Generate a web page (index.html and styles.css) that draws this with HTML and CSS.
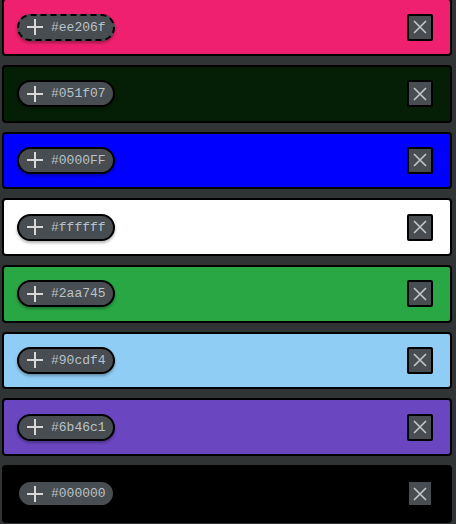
FILE: index.html
```html
<!DOCTYPE html>
<html>
<head>
<meta charset="utf-8">
<link rel="stylesheet" href="styles.css">
</head>
<body>
<div class="list">
  <div class="row" style="background:#ee206f">
    <button class="pill pill-focus"><svg class="plus" viewBox="0 0 16 16"><path d="M8 0V16M0 8H16"/></svg><span>#ee206f</span></button>
    <button class="close"><svg viewBox="0 0 14 14"><path d="M1 1L13 13M13 1L1 13"/></svg></button>
  </div>
  <div class="row" style="background:#051f07">
    <button class="pill"><svg class="plus" viewBox="0 0 16 16"><path d="M8 0V16M0 8H16"/></svg><span>#051f07</span></button>
    <button class="close"><svg viewBox="0 0 14 14"><path d="M1 1L13 13M13 1L1 13"/></svg></button>
  </div>
  <div class="row" style="background:#0000FF">
    <button class="pill"><svg class="plus" viewBox="0 0 16 16"><path d="M8 0V16M0 8H16"/></svg><span>#0000FF</span></button>
    <button class="close"><svg viewBox="0 0 14 14"><path d="M1 1L13 13M13 1L1 13"/></svg></button>
  </div>
  <div class="row" style="background:#ffffff">
    <button class="pill"><svg class="plus" viewBox="0 0 16 16"><path d="M8 0V16M0 8H16"/></svg><span>#ffffff</span></button>
    <button class="close"><svg viewBox="0 0 14 14"><path d="M1 1L13 13M13 1L1 13"/></svg></button>
  </div>
  <div class="row" style="background:#2aa745">
    <button class="pill"><svg class="plus" viewBox="0 0 16 16"><path d="M8 0V16M0 8H16"/></svg><span>#2aa745</span></button>
    <button class="close"><svg viewBox="0 0 14 14"><path d="M1 1L13 13M13 1L1 13"/></svg></button>
  </div>
  <div class="row" style="background:#90cdf4">
    <button class="pill"><svg class="plus" viewBox="0 0 16 16"><path d="M8 0V16M0 8H16"/></svg><span>#90cdf4</span></button>
    <button class="close"><svg viewBox="0 0 14 14"><path d="M1 1L13 13M13 1L1 13"/></svg></button>
  </div>
  <div class="row" style="background:#6b46c1">
    <button class="pill"><svg class="plus" viewBox="0 0 16 16"><path d="M8 0V16M0 8H16"/></svg><span>#6b46c1</span></button>
    <button class="close"><svg viewBox="0 0 14 14"><path d="M1 1L13 13M13 1L1 13"/></svg></button>
  </div>
  <div class="row" style="background:#000000">
    <button class="pill"><svg class="plus" viewBox="0 0 16 16"><path d="M8 0V16M0 8H16"/></svg><span>#000000</span></button>
    <button class="close"><svg viewBox="0 0 14 14"><path d="M1 1L13 13M13 1L1 13"/></svg></button>
  </div>
</div>
</body>
</html>
```

FILE: styles.css
```css
html, body {
  margin: 0;
  padding: 0;
  background: #303435;
  overflow: hidden;
}
.list {
  display: flex;
  flex-direction: column;
  gap: 9px;
  margin: -1.67px 4px 0 2px;
}
.row {
  box-sizing: border-box;
  height: 57.67px;
  border: 2px solid #000;
  border-radius: 4px;
  display: flex;
  align-items: center;
  justify-content: space-between;
  padding: 0 17px 0 13px;
}
.pill {
  box-sizing: border-box;
  height: 27px;
  width: 98px;
  border: 2px solid #000;
  border-radius: 14px;
  background: #474d50;
  display: flex;
  align-items: center;
  padding: 0 0 0 8px;
  gap: 8px;
  box-shadow: 0 2px 3px rgba(0,0,0,0.3);
  font-family: "Liberation Mono", "DejaVu Sans Mono", monospace;
  font-size: 13px;
  color: #b8c2cc;
  cursor: pointer;
}
.pill-focus {
  border-style: dashed;
}
.plus {
  width: 16px;
  height: 16px;
  fill: none;
  stroke: #d8d8d8;
  stroke-width: 2;
}
.close {
  box-sizing: border-box;
  width: 26px;
  height: 27px;
  border: 2px solid #000;
  border-radius: 2px;
  background: #474d50;
  display: flex;
  align-items: center;
  justify-content: center;
  padding: 0;
  cursor: pointer;
}
.close svg {
  width: 14px;
  height: 14px;
  fill: none;
  stroke: #c4c8ca;
  stroke-width: 1.6;
}
```
